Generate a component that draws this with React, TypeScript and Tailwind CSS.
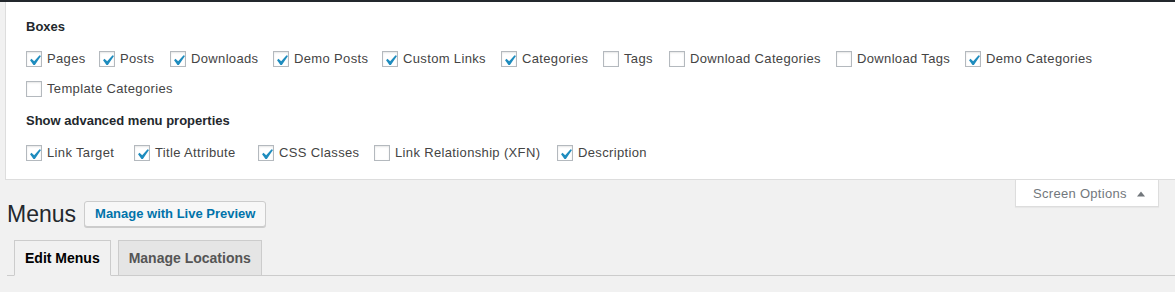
import React from "react";

type Item = { label: string; checked: boolean; w?: string };

const boxes: Item[] = [
  { label: "Pages", checked: true, w: "w-[73px]" },
  { label: "Posts", checked: true, w: "w-[71px]" },
  { label: "Downloads", checked: true, w: "w-[103px]" },
  { label: "Demo Posts", checked: true, w: "w-[109px]" },
  { label: "Custom Links", checked: true, w: "w-[119px]" },
  { label: "Categories", checked: true, w: "w-[102px]" },
  { label: "Tags", checked: false, w: "w-[66px]" },
  { label: "Download Categories", checked: false, w: "w-[167px]" },
  { label: "Download Tags", checked: false, w: "w-[129px]" },
  { label: "Demo Categories", checked: true, w: "w-[150px]" },
  { label: "Template Categories", checked: false },
];

const advanced: Item[] = [
  { label: "Link Target", checked: true, w: "w-[108px]" },
  { label: "Title Attribute", checked: true, w: "w-[124px]" },
  { label: "CSS Classes", checked: true, w: "w-[116px]" },
  { label: "Link Relationship (XFN)", checked: false, w: "w-[183px]" },
  { label: "Description", checked: true },
];

// wp style checkbox, tick is the dashicons "yes" glyph
function Check({ item }: { item: Item }) {
  return (
    <label className={`flex items-center h-4 shrink-0 ${item.w ?? ""}`}>
      <span className="relative w-4 h-4 bg-white border border-[#b4b9be] shadow-[inset_0_1px_2px_rgba(0,0,0,0.1)]">
        {item.checked && (
          <svg
            className="absolute left-[-3px] top-[-2px]"
            width="21"
            height="21"
            viewBox="0 0 20 20"
          >
            <path
              fill="#1e8cbe"
              d="M14.83 4.89l1.34.94-5.81 8.38H9.02L5.78 9.67l1.34-1.25 2.57 2.4z"
            />
          </svg>
        )}
      </span>
      <span className="ml-[5px] text-[13px] leading-4 tracking-[0.35px] text-[#444] whitespace-nowrap">
        {item.label}
      </span>
    </label>
  );
}

export default function App() {
  return (
    <div
      className="w-[1175px] h-[292px] overflow-hidden bg-[#f1f1f1]"
      style={{ fontFamily: '"Liberation Sans", Arial, sans-serif' }}
    >
      <div className="h-[2px] bg-[#23282d]" />

      {/* screen options panel */}
      <div className="ml-[5px] bg-white border-l border-b border-[#ddd] pl-[20px] pt-[18px] pb-[18px]">
        <h5 className="text-[13px] leading-[18px] font-bold text-[#23282d] -mt-[2px]">Boxes</h5>
        <div className="flex flex-wrap gap-y-[14px] mt-[15px] pr-[10px]">
          {boxes.map((b) => (
            <Check key={b.label} item={b} />
          ))}
        </div>
        <h5 className="text-[13px] leading-[18px] font-bold text-[#23282d] mt-[15px]">
          Show advanced menu properties
        </h5>
        <div className="flex mt-[15px]">
          {advanced.map((b) => (
            <Check key={b.label} item={b} />
          ))}
        </div>
      </div>

      <div className="flex items-start justify-between">
        <div className="flex items-center mt-[20px] ml-[7px]">
          <h1 className="text-[23px] leading-[28px] text-[#23282d] font-normal">Menus</h1>
          <button className="ml-[8px] h-[26px] px-[10px] text-[13px] font-bold text-[#0073aa] bg-[#f7f7f7] border border-[#ccc] rounded-[3px] shadow-[0_1px_0_#ccc]">
            Manage with Live Preview
          </button>
        </div>
        <div className="mr-[16px] w-[144px] h-[27px] bg-white border border-t-0 border-[#ddd] flex items-center pl-[17px] pt-px shadow-[0_1px_1px_rgba(0,0,0,0.04)]">
          <span className="text-[13px] tracking-[0.3px] text-[#72777c]">Screen Options</span>
          <svg className="ml-[10px]" width="8" height="6" viewBox="0 0 8 6">
            <path d="M0 5.5L4 0.5L8 5.5Z" fill="#72777c" />
          </svg>
        </div>
      </div>

      <div className="flex items-end ml-[7px] mt-[12px] border-b border-[#ccc]">
        <div className="ml-[7px] -mb-px px-[10px] py-[5px] text-[14px] leading-[24px] font-bold text-[#000] bg-[#f1f1f1] border border-[#ccc] border-b-[#f1f1f1]">
          Edit Menus
        </div>
        <div className="ml-[7px] -mb-px px-[10px] py-[5px] text-[14px] leading-[24px] font-bold text-[#555] bg-[#e5e5e5] border border-[#ccc]">
          Manage Locations
        </div>
      </div>
    </div>
  );
}
